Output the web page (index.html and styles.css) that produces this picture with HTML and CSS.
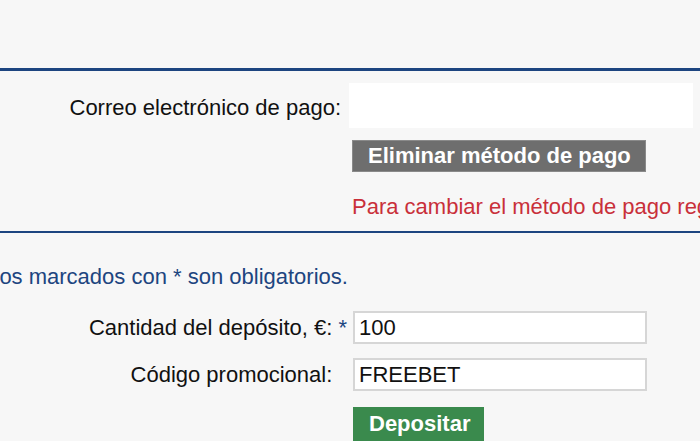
FILE: index.html
```html
<!DOCTYPE html>
<html lang="es">
<head>
  <meta charset="UTF-8" />
  <meta name="viewport" content="width=device-width, initial-scale=1.0"/>
  <title>Depósito</title>
  <link rel="stylesheet" href="styles.css">
</head>
<body>
  <div class="top"></div>

  <section class="method">
    <div class="row">
      <label class="label" for="payEmail">Correo electrónico de pago:</label>
      <input class="email" id="payEmail" type="text" value="">
    </div>
    <div class="row">
      <span></span>
      <div><button class="btn btn-grey">Eliminar método de pago</button></div>
    </div>
    <div class="row">
      <span></span>
      <p class="warn">Para cambiar el método de pago registrado, contacte con el servicio de atención al cliente.</p>
    </div>
  </section>

  <section class="deposit">
    <p class="note">Los campos marcados con * son obligatorios.</p>

    <div class="form">
      <label class="label" for="amount">Cantidad del depósito, €: <span class="req">*</span></label>
      <input class="field" id="amount" type="text" value="100">

      <label class="label" for="promo">Código promocional: <span class="req blank">*</span></label>
      <input class="field" id="promo" type="text" value="FREEBET">

      <span></span>
      <div><button class="btn btn-green">Depositar</button></div>
    </div>
  </section>
</body>
</html>
```

FILE: styles.css
```css
* {
  margin: 0;
  padding: 0;
  box-sizing: border-box;
  font-family: 'Liberation Sans', Arial, sans-serif;
}

body {
  background: #f7f7f7;
  color: #111;
  font-size: 22px;
  overflow: hidden;
  height: 441px;
}

.top {
  height: 68px;
}

.method {
  border-top: 3px solid #1d4580;
  border-bottom: 2px solid #1d4580;
  padding: 12px 0 12px;
  height: 165px;
}

.row {
  display: grid;
  grid-template-columns: 341px 1fr;
  column-gap: 8px;
  align-items: center;
}

.row:first-child .label {
  padding-top: 5px;
}

.row + .row {
  margin-top: 12px;
}

.label {
  text-align: right;
  white-space: nowrap;
}

.email {
  width: 344px;
  height: 45px;
  border: none;
  background: #fff;
  outline: none;
}

.btn {
  border: 1px solid #8a8a8a;
  color: #fff;
  font-weight: bold;
  font-size: 22px;
  line-height: 30px;
  white-space: nowrap;
  text-align: left;
  padding: 0 0 0 15px;
  cursor: pointer;
}

.btn-grey {
  background: #6e6e6e;
  margin-left: 3px;
  width: 294px;
}

.btn-green {
  background: #3a8a4d;
  border-color: #3a8a4d;
  line-height: 32px;
  width: 131px;
}

.warn {
  color: #c9303a;
  white-space: nowrap;
  margin: 10px 0 0 3px;
}

.deposit {
  padding-top: 31px;
}

.note {
  color: #1d4580;
  margin-left: -96px;
  white-space: nowrap;
}

.form {
  display: grid;
  grid-template-columns: 347px 294px;
  column-gap: 6px;
  row-gap: 14px;
  align-items: center;
  margin-top: 21px;
}

.req {
  color: #1d4580;
}

.req.blank {
  visibility: hidden;
}

.field {
  height: 33px;
  border: 2px solid #d6d6d6;
  background: #fff;
  font-size: 22px;
  padding: 0 4px;
  color: #111;
  outline: none;
}

.form .btn-green {
  margin-top: 2px;
}
```
